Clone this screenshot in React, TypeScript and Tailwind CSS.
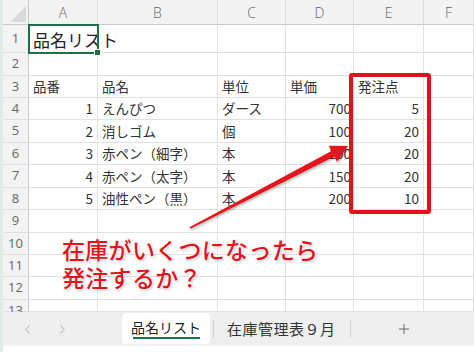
import { ChevronLeft, ChevronRight, Plus } from 'lucide-react';

const jp = "font-['Noto_Sans_CJK_JP','Noto_Sans',sans-serif]";

const cols = ['A', 'B', 'C', 'D', 'E', 'F'];

// rows 1..13 (row 13 is cut off by the sheet tabs)
const rows: string[][] = [
  ['', '', '', '', '', ''],
  ['', '', '', '', '', ''],
  ['品番', '品名', '単位', '単価', '発注点', ''],
  ['1', 'えんぴつ', 'ダース', '700', '5', ''],
  ['2', '消しゴム', '個', '100', '20', ''],
  ['3', '赤ペン（細字）', '本', '100', '20', ''],
  ['4', '赤ペン（太字）', '本', '150', '20', ''],
  ['5', '油性ペン（黒）', '本', '200', '10', ''],
  ['', '', '', '', '', ''],
  ['', '', '', '', '', ''],
  ['', '', '', '', '', ''],
  ['', '', '', '', '', ''],
  ['', '', '', '', '', ''],
];

const isNum = (v: string) => /^\d+$/.test(v);

function Sheet() {
  return (
    <div className="grid grid-cols-[26px_69px_120px_68px_68px_70px_1fr] grid-rows-[25px_28px_23px_22px_22px_23px_22px_23px_22px_23px_22px_22px_23px_12px] overflow-hidden">
      {/* Corner */}
      <div className="relative bg-[#f3f3f3] border-r border-b border-[#c9c9c9]">
        <svg className="absolute right-[2px] bottom-[2px]" width="16" height="16" viewBox="0 0 16 16">
          <polygon points="16,0 16,16 0,16" fill="#dadada" />
        </svg>
      </div>
      {cols.map((c) => (
        <div
          key={c}
          className="flex items-center justify-center bg-[#f3f3f3] border-r border-r-[#dcdcdc] border-b border-b-[#c9c9c9] text-[14px] text-[#666] font-['Open_Sans',sans-serif] font-light"
        >
          {c}
        </div>
      ))}

      {rows.map((r, i) => (
        <Row key={i} n={i + 1} cells={r} />
      ))}
    </div>
  );
}

function Row({ n, cells }: { n: number; cells: string[] }) {
  return (
    <>
      <div
        className={`flex justify-center bg-[#f3f3f3] border-r border-r-[#c9c9c9] border-b border-b-[#e0e0e0] text-[13px] text-[#666] font-['Open_Sans',sans-serif] ${n === 13 ? 'items-start pt-[1px]' : 'items-center'}`}
      >
        {n}
      </div>
      {cells.map((v, j) =>
        n === 1 && j === 0 ? (
          <div key={j} className="relative border-r border-b border-[#e1e1e1]">
            <span className={`absolute left-[4px] top-[2px] whitespace-nowrap text-[17px] text-[#222] ${jp}`}>品名リスト</span>
            <div className="absolute -left-px -top-px right-[-2px] bottom-[-2px] border-2 border-[#1e7145]" />
            <div className="absolute right-[-4px] bottom-[-4px] w-[5px] h-[5px] bg-[#1e7145] border border-white box-content" />
          </div>
        ) : (
          <div
            key={j}
            className={`flex items-center whitespace-nowrap border-r border-b border-[#e1e1e1] text-[13.5px] text-[#333] ${jp} ${
              isNum(v) ? (j === 3 ? 'justify-end pr-[2px]' : 'justify-end pr-[4px]') : 'pl-[4px]'
            }`}
          >
            {v}
          </div>
        ),
      )}
    </>
  );
}

function Tabs() {
  return (
    <div className="flex h-[34px] bg-[#efefef] items-stretch">
      <div className="w-[119px] flex items-center text-[#a0a0a0]">
        <ChevronLeft size={15} strokeWidth={1.4} className="ml-[17px]" />
        <ChevronRight size={15} strokeWidth={1.4} className="ml-[20px]" />
      </div>
      <div className="w-[88px] mt-px mb-[2px] bg-white rounded-[4px] flex flex-col items-center justify-center">
        <span className={`text-[14px] text-[#222] leading-[18px] ${jp}`}>品名リスト</span>
        <div className="w-[67px] h-[2px] bg-[#117a43] mt-[1px]" />
      </div>
      <div className="ml-[3px] my-[8px] w-px bg-[#cfcfcf]" />
      <div className={`flex items-center pl-[13px] pr-[14px] text-[15px] text-[#333] tracking-[0.5px] ${jp}`}>在庫管理表９月</div>
      <div className="my-[8px] w-px bg-[#cfcfcf]" />
      <div className="w-[106px] flex items-center justify-center text-[#555]">
        <Plus size={16} strokeWidth={1.3} />
      </div>
    </div>
  );
}

export default function App() {
  return (
    <div className="relative w-[474px] h-[352px] overflow-hidden bg-white flex">
      <div className="w-[3px] bg-[#e3eae5]" />
      <div className="flex-1 flex flex-col">
        <Sheet />
        <Tabs />
        <div className="flex-1 bg-white" />
      </div>

      {/* highlight box */}
      <div className="absolute left-[349px] top-[73px] w-[82px] h-[141px] border-4 border-[#e2121c] rounded-[3px]" />

      {/* arrow */}
      <svg className="absolute left-0 top-0 pointer-events-none" width="474" height="352" viewBox="0 0 474 352">
        <defs>
          <filter id="sh" x="-10%" y="-10%" width="120%" height="130%">
            <feDropShadow dx="1" dy="1.5" stdDeviation="1" floodColor="#000" floodOpacity="0.3" />
          </filter>
        </defs>
        <polygon
          filter="url(#sh)"
          fill="#e2121c"
          points="190.5,228.8 334.3,156.5 337,161.8 348,146 328.8,145.8 331.5,151.1 189.5,227.2"
        />
      </svg>

      {/* callout */}
      <div
        className={`absolute left-[62px] top-[235px] text-[23px] leading-[28px] font-medium text-[#e0141c] tracking-[0.3px] ${jp} [text-shadow:0_0_2px_#fff,0_0_2px_#fff,0_0_3px_#fff,1px_1px_3px_rgba(0,0,0,0.35)]`}
      >
        <div>在庫がいくつになったら</div>
        <div>発注するか？</div>
      </div>
    </div>
  );
}
